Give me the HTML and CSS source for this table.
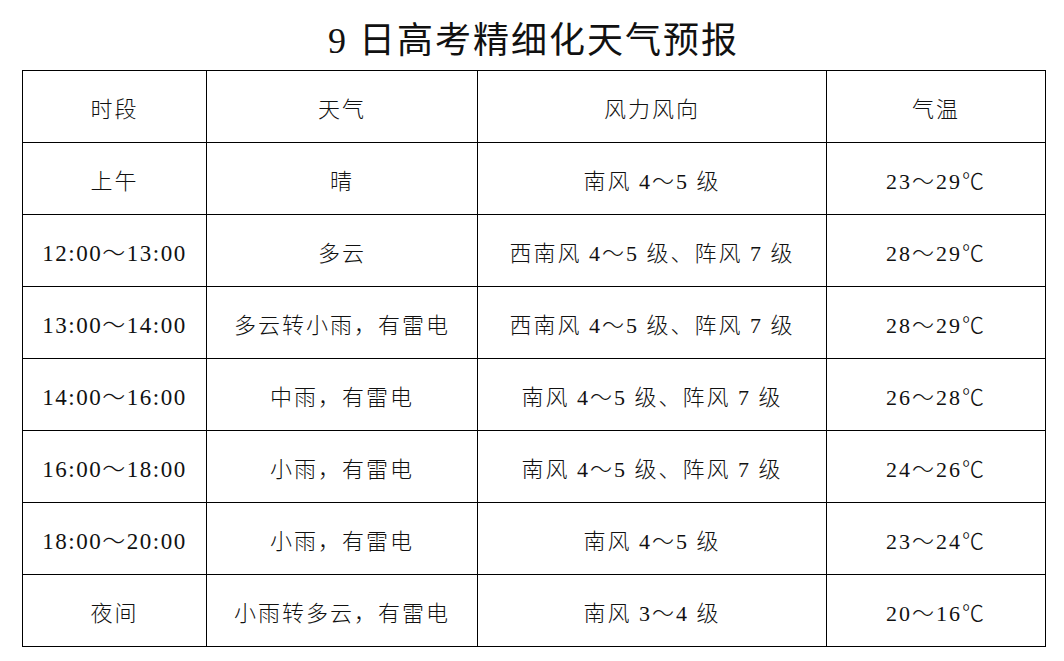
FILE: index.html
```html
<!DOCTYPE html>
<html lang="zh-CN">
<head>
<meta charset="utf-8">
<title>9日高考精细化天气预报</title>
<link rel="stylesheet" href="styles.css">
</head>
<body>
<div class="page">
  <h1 class="title">9 日高考精细化天气预报</h1>
  <table class="forecast">
    <colgroup>
      <col class="c1"><col class="c2"><col class="c3"><col class="c4">
    </colgroup>
    <thead>
      <tr><th>时段</th><th>天气</th><th>风力风向</th><th>气温</th></tr>
    </thead>
    <tbody>
      <tr><td>上午</td><td>晴</td><td>南风 4～5 级</td><td>23～29℃</td></tr>
      <tr><td class="time">12:00～13:00</td><td>多云</td><td>西南风 4～5 级、阵风 7 级</td><td>28～29℃</td></tr>
      <tr><td class="time">13:00～14:00</td><td>多云转小雨，有雷电</td><td>西南风 4～5 级、阵风 7 级</td><td>28～29℃</td></tr>
      <tr><td class="time">14:00～16:00</td><td>中雨，有雷电</td><td>南风 4～5 级、阵风 7 级</td><td>26～28℃</td></tr>
      <tr><td class="time">16:00～18:00</td><td>小雨，有雷电</td><td>南风 4～5 级、阵风 7 级</td><td>24～26℃</td></tr>
      <tr><td class="time">18:00～20:00</td><td>小雨，有雷电</td><td>南风 4～5 级</td><td>23～24℃</td></tr>
      <tr><td>夜间</td><td>小雨转多云，有雷电</td><td>南风 3～4 级</td><td>20～16℃</td></tr>
    </tbody>
  </table>
</div>
</body>
</html>
```

FILE: styles.css
```css
html, body {
  margin: 0;
  padding: 0;
  background: #fff;
}
.page {
  width: 1064px;
  height: 661px;
  box-sizing: border-box;
  padding: 0 0 0 22px;
  font-family: "Liberation Serif", "Noto Sans CJK SC", serif;
  color: #111;
}
.title {
  margin: 0;
  width: 1023px;
  height: 70px;
  box-sizing: border-box;
  padding-top: 17px;
  line-height: 48px;
  text-align: center;
  font-size: 36px;
  font-weight: 400;
  letter-spacing: 2px;
}
.forecast {
  border-collapse: collapse;
  table-layout: fixed;
  width: 1024px;
}
.c1 { width: 184px; }
.c2 { width: 271px; }
.c3 { width: 349px; }
.c4 { width: 219px; }
.forecast th,
.forecast td {
  border: 1.5px solid #000;
  height: 71px;
  padding: 0;
  text-align: center;
  vertical-align: middle;
  font-size: 22px;
  font-weight: 300;
  letter-spacing: 2px;
}
.forecast td.time {
  font-size: 23px;
  letter-spacing: 1.5px;
}
```
